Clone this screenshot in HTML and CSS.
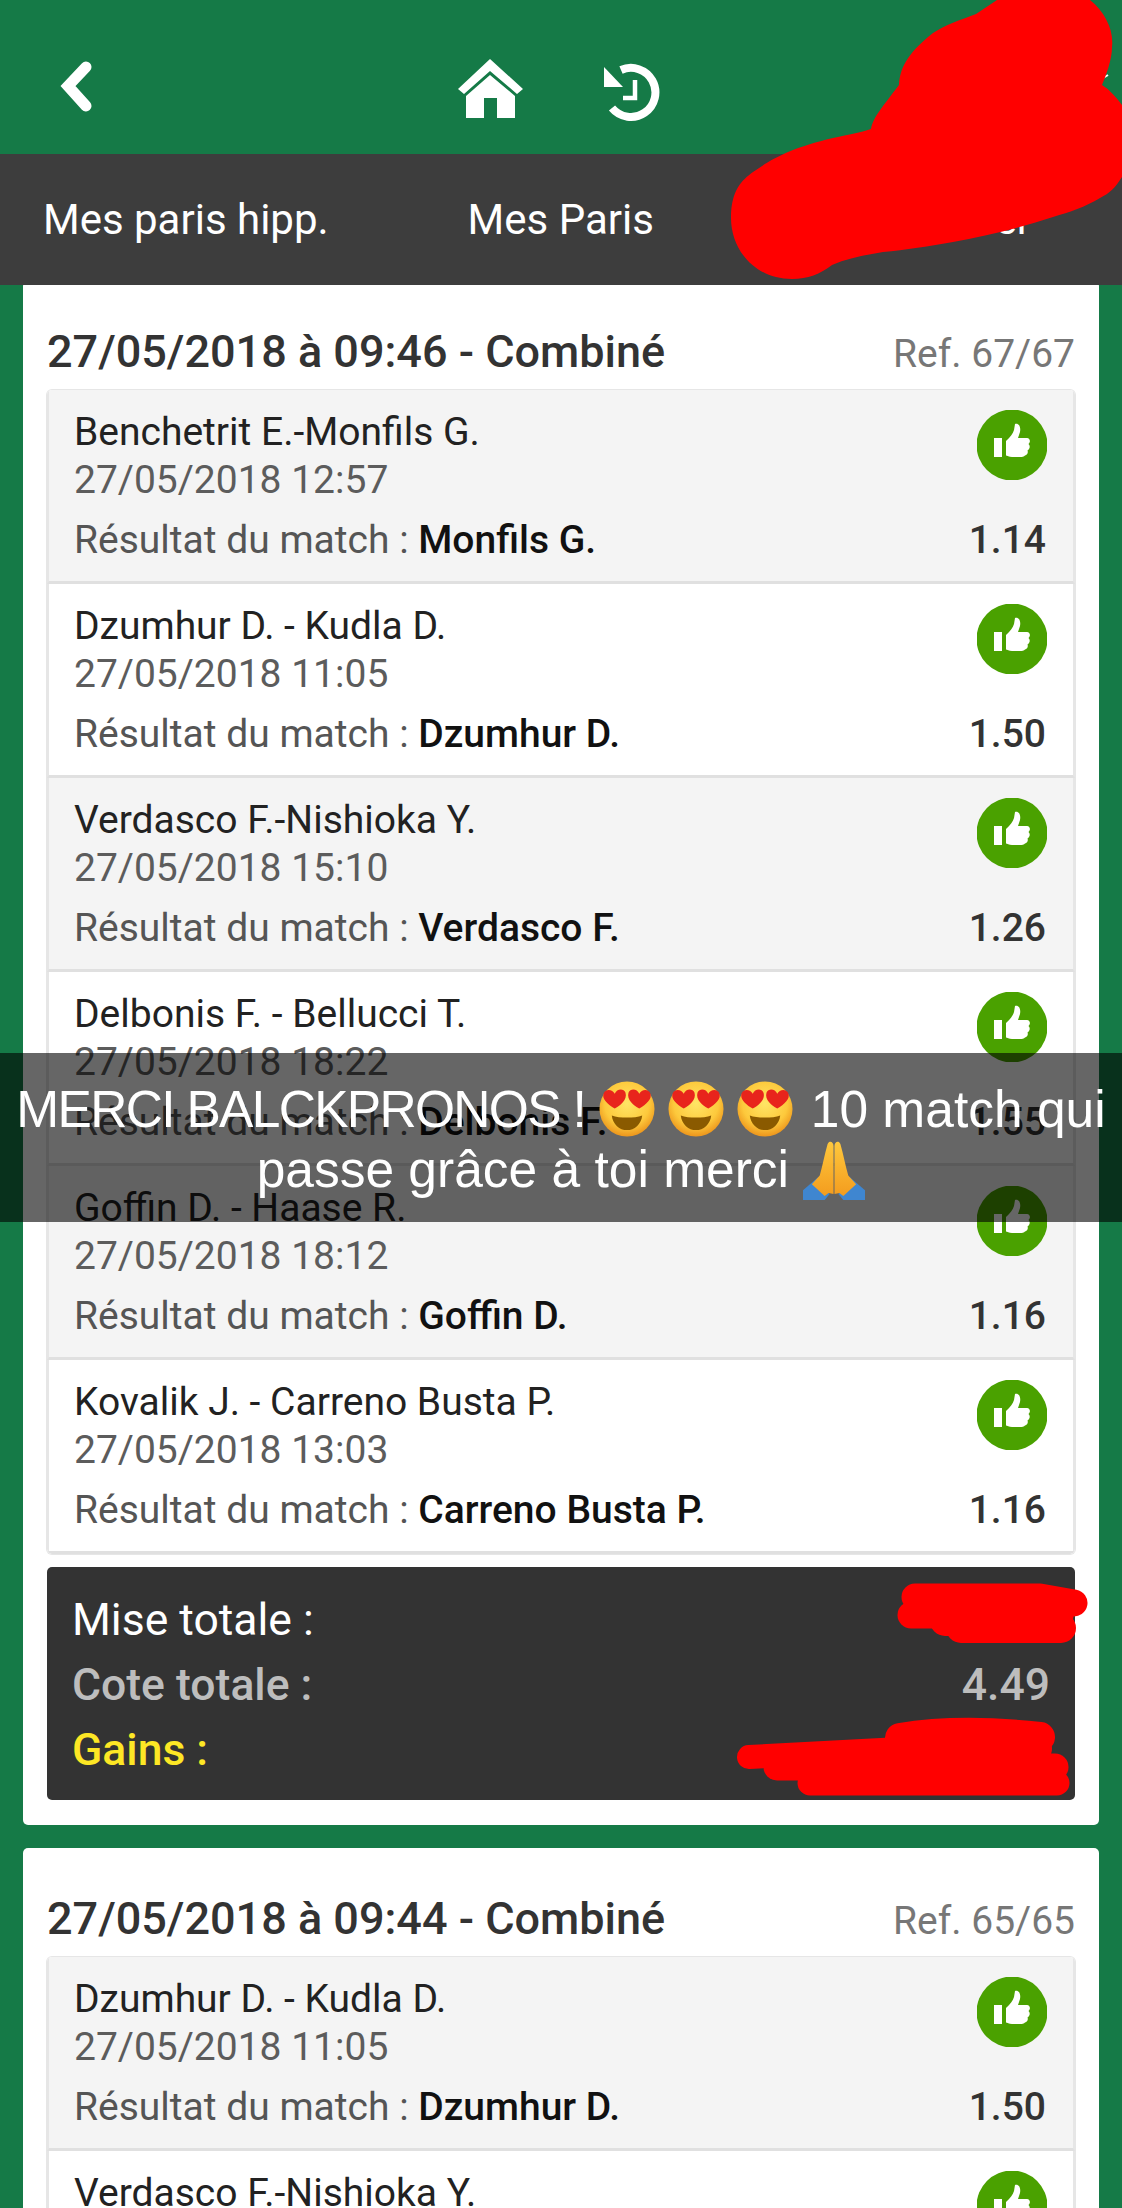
FILE: index.html
```html
<!DOCTYPE html>
<html lang="fr">
  <head>
    <meta charset="UTF-8" />
    <meta name="viewport" content="width=device-width, initial-scale=1.0" />
    <title>Mes Paris</title>
    <link rel="stylesheet" href="styles.css">
  </head>
  <body>
    <svg class="defs" width="0" height="0">
      <defs>
        <radialGradient id="faceFill" cx="50%" cy="40%" r="58%">
          <stop offset="0" stop-color="#ffe566" />
          <stop offset="0.7" stop-color="#fdc93c" />
          <stop offset="1" stop-color="#ee9a1f" />
        </radialGradient>
        <linearGradient id="handFill" x1="0" y1="0" x2="0" y2="1">
          <stop offset="0" stop-color="#ffc83d" />
          <stop offset="1" stop-color="#f39c1e" />
        </linearGradient>
        <symbol id="thumb" viewBox="0 0 70 70">
          <circle cx="35" cy="35" r="35.5" fill="#4aa100" />
          <rect x="17" y="28" width="8" height="19" fill="#fff" />
          <path fill="#fff" d="M29 31C33 27 36 24 37 20L38 14C42 13 44 17 43 22L41 28H50C53 28 54 32 51.5 34C53.5 36 53 39 50.5 40.5C51.5 43 50 45 48 45.500C47 47 45 47 43 47H35C32 47 30 45.500 29 45.500Z" />
        </symbol>
        <symbol id="hearteyes" viewBox="0 0 57 57">
          <circle cx="28.500" cy="28.500" r="28" fill="url(#faceFill)" />
          <path fill="#8a5a00" d="M13 35C21 38 36 38 44 35C43 44 36 50 28.500 50C21 50 14 44 13 35Z" />
          <path fill="#e8241c" d="M16 28C9 24 2 18 5 12C8 7 14 9 16 13C18 8 25 7 27 12C29 19 22 25 16 28Z" />
          <path fill="#e8241c" d="M41 28C35 25 28 19 30 12C32 7 39 8 41 13C43 9 49 7 52 12C55 18 48 24 41 28Z" />
        </symbol>
        <symbol id="pray" viewBox="0 0 63 61">
          <path fill="#3f86d0" d="M0 61V51L15 38L27 55L22 61Z" />
          <path fill="#3f86d0" d="M63 61V51L48 38L36 55L41 61Z" />
          <path fill="url(#handFill)" d="M31 55V6C31 2 27 0 25 4C22 14 20 26 17 36L9 45L22 57L26 54Z" />
          <path fill="url(#handFill)" d="M32 55V6C32 2 36 0 38 4C41 14 43 26 46 36L54 45L41 57L37 54Z" />
        </symbol>
      </defs>
    </svg>

    <header class="topbar">
      <svg class="icon-back" width="34" height="54" viewBox="0 0 34 54">
        <path d="M26 7L8 26L26 46" fill="none" stroke="#fff" stroke-width="11" stroke-linecap="round" />
      </svg>
      <svg class="icon-home" width="70" height="64" viewBox="0 0 70 64">
        <path fill="#fff" d="M34 2L67 32L61 37L34 14L8 37L2 32Z" />
        <path fill="#fff" d="M34 18L59 39V61H41V41H28V61H10V39Z" />
      </svg>
      <svg class="icon-history" width="60" height="62" viewBox="0 0 60 62">
        <path d="M20 8A24.500 24.500 0 1 1 11 46" fill="none" stroke="#fff" stroke-width="8" />
        <path fill="#fff" d="M3 5V25H22Z" />
        <path d="M34 18V36H22" fill="none" stroke="#fff" stroke-width="4.500" />
      </svg>
    </header>

    <nav class="tabs">
      <span class="tab tab-first">Mes paris hipp.</span>
      <span class="tab tab-second">Mes Paris</span>
      <span class="tab tab-third">er</span>
    </nav>

    <section class="card card-first">
      <div class="card-head">
        <h2>27/05/2018 à 09:46 - Combiné</h2>
        <span class="ref">Ref. 67/67</span>
      </div>
      <ul class="bets">
        <li class="bet">
          <div class="bet-top">
            <div>
              <p class="match">Benchetrit E.-Monfils G.</p>
              <p class="when">27/05/2018 12:57</p>
            </div>
            <svg class="thumb"><use href="#thumb" /></svg>
          </div>
          <div class="bet-result">
            <p>Résultat du match : <b>Monfils G.</b></p>
            <span class="odds">1.14</span>
          </div>
        </li>
        <li class="bet">
          <div class="bet-top">
            <div>
              <p class="match">Dzumhur D. - Kudla D.</p>
              <p class="when">27/05/2018 11:05</p>
            </div>
            <svg class="thumb"><use href="#thumb" /></svg>
          </div>
          <div class="bet-result">
            <p>Résultat du match : <b>Dzumhur D.</b></p>
            <span class="odds">1.50</span>
          </div>
        </li>
        <li class="bet">
          <div class="bet-top">
            <div>
              <p class="match">Verdasco F.-Nishioka Y.</p>
              <p class="when">27/05/2018 15:10</p>
            </div>
            <svg class="thumb"><use href="#thumb" /></svg>
          </div>
          <div class="bet-result">
            <p>Résultat du match : <b>Verdasco F.</b></p>
            <span class="odds">1.26</span>
          </div>
        </li>
        <li class="bet">
          <div class="bet-top">
            <div>
              <p class="match">Delbonis F. - Bellucci T.</p>
              <p class="when">27/05/2018 18:22</p>
            </div>
            <svg class="thumb"><use href="#thumb" /></svg>
          </div>
          <div class="bet-result">
            <p>Résultat du match : <b>Delbonis F.</b></p>
            <span class="odds">1.55</span>
          </div>
        </li>
        <li class="bet">
          <div class="bet-top">
            <div>
              <p class="match">Goffin D. - Haase R.</p>
              <p class="when">27/05/2018 18:12</p>
            </div>
            <svg class="thumb"><use href="#thumb" /></svg>
          </div>
          <div class="bet-result">
            <p>Résultat du match : <b>Goffin D.</b></p>
            <span class="odds">1.16</span>
          </div>
        </li>
        <li class="bet">
          <div class="bet-top">
            <div>
              <p class="match">Kovalik J. - Carreno Busta P.</p>
              <p class="when">27/05/2018 13:03</p>
            </div>
            <svg class="thumb"><use href="#thumb" /></svg>
          </div>
          <div class="bet-result">
            <p>Résultat du match : <b>Carreno Busta P.</b></p>
            <span class="odds">1.16</span>
          </div>
        </li>
      </ul>
      <div class="summary">
        <p class="sum-stake">Mise totale :</p>
        <p class="sum-odds">Cote totale : <span>4.49</span></p>
        <p class="sum-gains">Gains :</p>
      </div>
    </section>

    <section class="card">
      <div class="card-head">
        <h2>27/05/2018 à 09:44 - Combiné</h2>
        <span class="ref">Ref. 65/65</span>
      </div>
      <ul class="bets">
        <li class="bet">
          <div class="bet-top">
            <div>
              <p class="match">Dzumhur D. - Kudla D.</p>
              <p class="when">27/05/2018 11:05</p>
            </div>
            <svg class="thumb"><use href="#thumb" /></svg>
          </div>
          <div class="bet-result">
            <p>Résultat du match : <b>Dzumhur D.</b></p>
            <span class="odds">1.50</span>
          </div>
        </li>
        <li class="bet">
          <div class="bet-top">
            <div>
              <p class="match">Verdasco F.-Nishioka Y.</p>
              <p class="when">27/05/2018 15:10</p>
            </div>
            <svg class="thumb"><use href="#thumb" /></svg>
          </div>
        </li>
      </ul>
    </section>

    <div class="caption">
      <p><span class="shout">MERCI BALCKPRONOS !</span> <svg class="emoji"><use href="#hearteyes" /></svg> <svg class="emoji"><use href="#hearteyes" /></svg> <svg class="emoji emoji-last"><use href="#hearteyes" /></svg> 10 match qui</p>
      <p>passe grâce à toi merci <svg class="emoji-pray"><use href="#pray" /></svg></p>
    </div>

    <!-- red marker scribbles drawn on top of the screenshot -->
    <svg class="scribbles" width="1122" height="2208" viewBox="0 0 1122 2208">
      <path d="M1103 78L1108 75" stroke="#fff" stroke-width="2" />
      <path fill="#ff0000" d="M731 218C731 190 742 180 753 172C770 160 790 148 833 138C850 134 860 133 871 129C873 118 880 110 899 85C900 70 905 55 933 33C945 25 960 20 976 14L997 0H1090C1105 12 1114 30 1112 47C1112 60 1106 75 1102 85C1110 90 1116 97 1122 105V177C1115 188 1110 193 1100 198C1085 207 1070 212 1053 217C1020 228 985 236 953 242C930 246 905 250 883 252C865 255 848 258 832 265C820 274 808 279 792 279C755 279 731 250 731 218Z" />
      <g fill="none" stroke="#ff0000" stroke-linecap="round" stroke-linejoin="round">
        <path stroke-width="27" d="M915 1597H1040L1074 1603" />
        <path stroke-width="27" d="M911 1615H1060" />
        <path stroke-width="30" d="M945 1621H1050" />
        <path stroke-width="30" d="M961 1628H1061" />
        <path stroke-width="30" d="M900 1738Q960 1728 1040 1737" />
        <path stroke-width="24" d="M749 1757L900 1749H1040" />
        <path stroke-width="27" d="M777 1767H1055" />
        <path stroke-width="25" d="M810 1783H1057" />
      </g>
    </svg>
  </body>
</html>
```

FILE: styles.css
```css
* {
  box-sizing: border-box;
}

body {
  position: relative;
  width: 1122px;
  height: 2208px;
  margin: 0;
  overflow: hidden;
  font-family: Roboto, "Noto Sans", sans-serif;
  background-color: #157a47;
}

p,
h2,
ul {
  margin: 0;
  padding: 0;
}

.defs {
  display: block;
}

/* Top bar */

.topbar {
  display: flex;
  align-items: flex-start;
  height: 154px;
}

.icon-back {
  margin: 60px 0 0 60px;
}

.icon-home {
  margin: 57px 0 0 362px;
}

.icon-history {
  margin: 62px 0 0 75px;
}

.tabs {
  position: relative;
  z-index: 1;
  display: flex;
  align-items: center;
  height: 131px;
  background-color: #3d3d3d;
  color: #fff;
  font-size: 42px;
}

.tab-first {
  margin-left: 43px;
}

.tab-second {
  margin-left: 139px;
}

.tab-third {
  margin-left: auto;
  margin-right: 91px;
}

/* Cards */

.card {
  margin: 0 23px 23px;
  padding: 0 24px 25px;
  background-color: #fff;
  border-radius: 5px;
}

.card-first {
  margin-top: -4px;
}

.card-head {
  display: flex;
  justify-content: space-between;
  align-items: baseline;
  height: 109px;
  padding-top: 47px;
}

h2 {
  font-size: 45px;
  font-weight: 500;
  line-height: 48px;
  color: #333;
}

.ref {
  font-size: 39px;
  color: #777;
}

.bets {
  list-style: none;
  border-radius: 5px;
  overflow: hidden;
  box-shadow: 0 0 0 1px #e6e6e6;
}

.bet {
  height: 194px;
  padding: 19px 27px 0 25px;
  border-left: 2px solid #e6e6e6;
  border-right: 2px solid #e6e6e6;
  border-bottom: 3px solid #e0e0e0;
  background-color: #fff;
}

.bet:nth-child(odd) {
  background-color: #f4f4f4;
}

.bet-top,
.bet-result {
  display: flex;
  justify-content: space-between;
  font-size: 39px;
  line-height: 47px;
}

.bet-top {
  height: 94px;
}

.bet-result {
  margin-top: 14px;
  color: #555;
}

.match {
  color: #222;
}

.when {
  margin-top: 1px;
  color: #5c5c5c;
}

.thumb {
  flex: none;
  width: 70px;
  height: 70px;
  margin: 1px -1px 0 0;
}

.bet-result b {
  font-weight: 500;
  color: #111;
}

.odds {
  font-weight: 500;
  color: #333;
}

/* Totals */

.summary {
  height: 233px;
  margin-top: 13px;
  padding: 21px 25px 0 25px;
  border-radius: 5px;
  background-color: #333;
  font-size: 44.5px;
  line-height: 65px;
}

.sum-stake {
  color: #fff;
}

.sum-odds {
  display: flex;
  justify-content: space-between;
  font-weight: 500;
  color: #bdbdbd;
}

.sum-gains {
  font-weight: 500;
  color: #fde725;
}

/* Snapchat style caption and marker overlay */

.caption {
  position: absolute;
  top: 1053px;
  left: 0;
  right: 0;
  z-index: 2;
  display: flex;
  flex-direction: column;
  justify-content: center;
  height: 169px;
  padding-top: 3px;
  background-color: rgba(0, 0, 0, 0.6);
  color: #fff;
  font-family: "Liberation Sans", sans-serif;
  font-size: 51.5px;
  line-height: 60px;
  text-align: center;
  white-space: nowrap;
}

.shout {
  letter-spacing: -1.7px;
}

.emoji {
  width: 56px;
  height: 56px;
  margin: 0 -0.5px;
  vertical-align: -10px;
}

.emoji-last {
  margin-right: 3px;
}

.emoji-pray {
  width: 62px;
  height: 60px;
  vertical-align: -13px;
}

.scribbles {
  position: absolute;
  top: 0;
  left: 0;
  z-index: 3;
}
```
